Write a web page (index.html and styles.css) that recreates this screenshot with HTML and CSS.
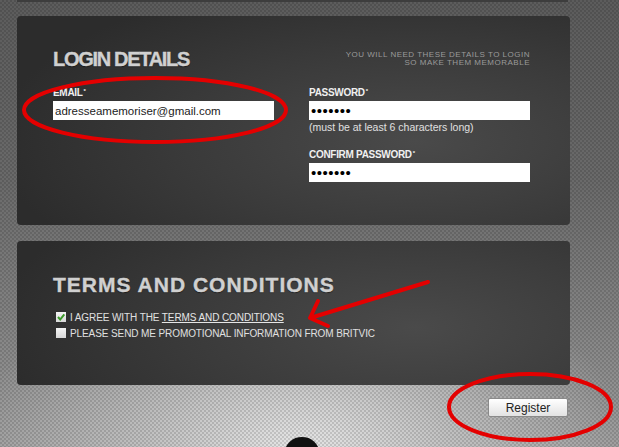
FILE: index.html
```html
<!DOCTYPE html>
<html lang="en">
<head>
    <meta charset="UTF-8">
    <title>Register</title>
    <link rel="stylesheet" href="styles.css">
</head>
<body>

<div class="page">
    <div class="prev-panel"></div>

    <div class="panel login">
        <div class="panel-head">
            <h2>LOGIN DETAILS</h2>
            <p class="note">YOU WILL NEED THESE DETAILS TO LOGIN<br>SO MAKE THEM MEMORABLE</p>
        </div>
        <div class="cols">
            <div class="col">
                <label for="email">EMAIL<sup>*</sup></label>
                <input type="text" id="email" value="adresseamemoriser@gmail.com">
            </div>
            <div class="col">
                <label for="pass">PASSWORD<sup>*</sup></label>
                <input type="password" id="pass" value="1234567">
                <span class="hint">(must be at least 6 characters long)</span>

                <label for="pass2" class="second">CONFIRM PASSWORD<sup>*</sup></label>
                <input type="password" id="pass2" value="1234567">
            </div>
        </div>
    </div>

    <div class="panel terms">
        <h2>TERMS AND CONDITIONS</h2>
        <div class="check-row">
            <span class="box">
                <svg width="10" height="10" viewBox="0 0 10 10"><path d="M2 5 L4.2 7.5 L8.3 2.3" fill="none" stroke="#3c9a2a" stroke-width="2"/></svg>
            </span>
            <span>I AGREE WITH THE <a href="#">TERMS AND CONDITIONS</a></span>
        </div>
        <div class="check-row">
            <span class="box"></span>
            <span>PLEASE SEND ME PROMOTIONAL INFORMATION FROM BRITVIC</span>
        </div>
    </div>

    <div class="actions">
        <button>Register</button>
    </div>

    <div class="logo-top"></div>
</div>

<!-- annotations drawn over the screenshot -->
<svg class="marks" width="619" height="447" viewBox="0 0 619 447">
    <ellipse cx="155" cy="110" rx="131" ry="32" fill="none" stroke="#e40000" stroke-width="4"/>
    <ellipse cx="530" cy="407" rx="81" ry="33" fill="none" stroke="#e40000" stroke-width="4"/>
    <path d="M428 282 L310 318 M318 301 L310 318 L328 326" fill="none" stroke="#e40000" stroke-width="4" stroke-linecap="round" stroke-linejoin="round"/>
</svg>

</body>
</html>
```

FILE: styles.css
```css
html, body {
    margin: 0;
    height: 447px;
    overflow: hidden;
}
body {
    position: relative;
    font-family: "Liberation Sans", Arial, sans-serif;
    background:
        repeating-conic-gradient(rgba(0, 0, 0, 0.13) 0 25%, transparent 0 50%) 0 0 / 4px 4px,
        radial-gradient(ellipse 330px 190px at 300px 450px, #e6e6e6, rgba(220, 220, 220, 0.6) 45%, rgba(200, 200, 200, 0) 100%),
        linear-gradient(#5c5c5c 0, #6a6a6a 180px, #858585 330px, #9c9c9c 447px);
}
.page {
    width: 553px;
    margin-left: 17px;
}
.prev-panel {
    height: 2px;
    width: 551px;
    background: #3d3d3d;
    margin-bottom: 14px;
}
.panel {
    border-radius: 4px;
    background:
        radial-gradient(ellipse 420px 170px at 72% 60%, #4a4a4a, #3a3a3a 55%, #2c2c2c 100%);
    box-sizing: border-box;
    padding: 33px 40px 0 36px;
    color: #e6e6e6;
}
.login {
    height: 209px;
    margin-bottom: 16px;
}
.terms {
    height: 144px;
}
h2 {
    margin: 0;
    font-size: 21px;
    line-height: 21px;
    font-weight: bold;
    color: #d0d0d0;
    -webkit-text-stroke: 0.4px #d0d0d0;
    text-shadow: 0 1px 1px rgba(0, 0, 0, 0.5);
}
.login h2 {
    font-size: 20px;
    letter-spacing: -1.3px;
}
.terms h2 {
    letter-spacing: 1px;
    margin-bottom: 14px;
}
.panel-head {
    display: flex;
    justify-content: space-between;
    align-items: flex-start;
}
.note {
    margin: 2px 0 0 0;
    text-align: right;
    font-size: 8px;
    line-height: 8px;
    letter-spacing: 0.5px;
    color: #9a9a9a;
}
.cols {
    display: flex;
    gap: 35px;
    margin-top: 18px;
}
.col {
    display: flex;
    flex-direction: column;
    width: 221px;
}
label {
    display: block;
    font-size: 10px;
    line-height: 10px;
    font-weight: bold;
    letter-spacing: -0.3px;
    color: #f0f0f0;
    margin-bottom: 3px;
}
label sup {
    font-size: 6px;
    line-height: 0;
    vertical-align: 3px;
    margin-left: 1px;
}
label.second {
    margin-top: 17px;
}
input {
    width: 221px;
    height: 19px;
    box-sizing: border-box;
    border: none;
    margin: 0;
    padding: 0 2px;
    background: #fff;
    font-family: "Liberation Sans", Arial, sans-serif;
    font-size: 11.5px;
    color: #222;
    outline: none;
}
input[type="password"] {
    font-size: 15px;
    letter-spacing: 0.5px;
    color: #000;
}
.hint {
    font-size: 10.5px;
    line-height: 12px;
    color: #e0e0e0;
    margin-top: 1px;
}
.check-row {
    display: flex;
    align-items: center;
    gap: 4px;
    height: 16px;
    font-size: 10px;
    letter-spacing: -0.1px;
    color: #e0e0e0;
    margin-left: 3px;
}
.check-row a {
    color: #e6e6e6;
}
.box {
    width: 10px;
    height: 10px;
    background: linear-gradient(#f4f4f4, #d8d8d8);
    flex: none;
    display: flex;
}
.actions {
    display: flex;
    justify-content: flex-end;
    padding: 13px 2px 0 0;
}
button {
    width: 80px;
    height: 19px;
    padding: 0;
    font-family: "Liberation Sans", Arial, sans-serif;
    font-size: 12px;
    color: #222;
    background: linear-gradient(#ffffff, #e2e2e2);
    border: 1px solid #8a8a8a;
    border-radius: 2px;
}
.logo-top {
    width: 34px;
    height: 30px;
    margin: 20px 0 0 268px;
    border-radius: 50%;
    background: #111;
}
.marks {
    position: absolute;
    left: 0;
    top: 0;
}
```
